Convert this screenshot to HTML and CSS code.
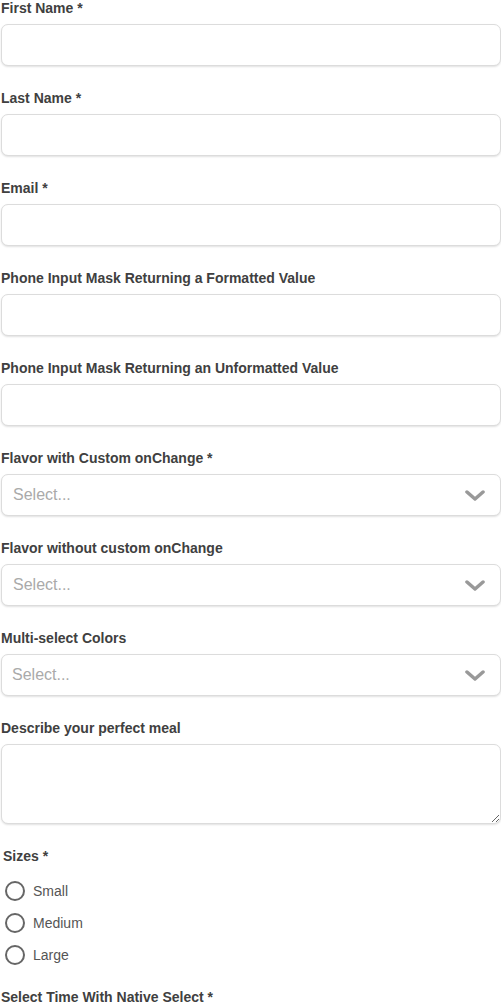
FILE: index.html
```html
<!DOCTYPE html>
<html>
<head>
<meta charset="utf-8">
<link rel="stylesheet" href="styles.css">
</head>
<body>
<form class="form">
  <div class="field">
    <label class="label">First Name *</label>
    <input class="input" type="text">
  </div>
  <div class="field">
    <label class="label">Last Name *</label>
    <input class="input" type="text">
  </div>
  <div class="field">
    <label class="label">Email *</label>
    <input class="input" type="text">
  </div>
  <div class="field">
    <label class="label">Phone Input Mask Returning a Formatted Value</label>
    <input class="input" type="text">
  </div>
  <div class="field">
    <label class="label">Phone Input Mask Returning an Unformatted Value</label>
    <input class="input" type="text">
  </div>
  <div class="field">
    <label class="label">Flavor with Custom onChange *</label>
    <div class="select">
      <span class="placeholder">Select...</span>
      <svg class="chevron" width="20" height="12" viewBox="0 0 20 12"><path d="M2 2 L10 9 L18 2" fill="none" stroke="#999" stroke-width="3.5" stroke-linecap="round" stroke-linejoin="round"/></svg>
    </div>
  </div>
  <div class="field">
    <label class="label">Flavor without custom onChange</label>
    <div class="select">
      <span class="placeholder">Select...</span>
      <svg class="chevron" width="20" height="12" viewBox="0 0 20 12"><path d="M2 2 L10 9 L18 2" fill="none" stroke="#999" stroke-width="3.5" stroke-linecap="round" stroke-linejoin="round"/></svg>
    </div>
  </div>
  <div class="field">
    <label class="label">Multi-select Colors</label>
    <div class="select">
      <span class="placeholder multi">Select...</span>
      <svg class="chevron" width="20" height="12" viewBox="0 0 20 12"><path d="M2 2 L10 9 L18 2" fill="none" stroke="#999" stroke-width="3.5" stroke-linecap="round" stroke-linejoin="round"/></svg>
    </div>
  </div>
  <div class="field">
    <label class="label">Describe your perfect meal</label>
    <textarea class="textarea"></textarea>
  </div>
  <div class="group">
    <div class="label group-label">Sizes *</div>
    <label class="radio-row"><span class="radio"></span><span class="radio-text">Small</span></label>
    <label class="radio-row"><span class="radio"></span><span class="radio-text">Medium</span></label>
    <label class="radio-row"><span class="radio"></span><span class="radio-text">Large</span></label>
  </div>
  <div class="field">
    <label class="label">Select Time With Native Select *</label>
  </div>
</form>
</body>
</html>
```

FILE: styles.css
```css
html, body {
  margin: 0;
  padding: 0;
  background: #fff;
}
body {
  font-family: "Liberation Sans", Arial, sans-serif;
  color: #444;
}
.form {
  display: flex;
  flex-direction: column;
  width: 501px;
}
.field {
  display: flex;
  flex-direction: column;
  margin-bottom: 24px;
}
.label {
  display: block;
  font-size: 14px;
  line-height: 16px;
  font-weight: bold;
  color: #404040;
  padding-left: 1px;
  margin-bottom: 8px;
}
.input, .select, .textarea {
  box-sizing: border-box;
  margin: 0 0 0 1px;
  width: 500px;
  height: 42px;
  border: 1px solid #dcdcdc;
  border-radius: 7px;
  box-shadow: 0 1px 2px rgba(0,0,0,0.12);
  background: #fff;
  font-family: inherit;
  font-size: 16px;
  outline: none;
}
.select {
  display: flex;
  align-items: center;
  justify-content: space-between;
  padding: 0 15px 0 11px;
}
.placeholder {
  color: #aaa;
  font-size: 16px;
}
.placeholder.multi {
  margin-left: -1px;
}
.chevron {
  display: block;
  margin-top: 1px;
}
.textarea {
  height: 80px;
  resize: vertical;
  display: block;
}
.group {
  display: flex;
  flex-direction: column;
  padding-left: 2px;
  margin-bottom: 18px;
}
.group-label {
  margin-bottom: 11px;
}
.radio-row {
  display: flex;
  align-items: center;
  height: 32px;
  padding-left: 3px;
}
.radio {
  box-sizing: border-box;
  width: 20px;
  height: 20px;
  border: 2px solid #666;
  border-radius: 50%;
  margin-right: 8px;
}
.radio-text {
  font-size: 14px;
  color: #555;
}
```
